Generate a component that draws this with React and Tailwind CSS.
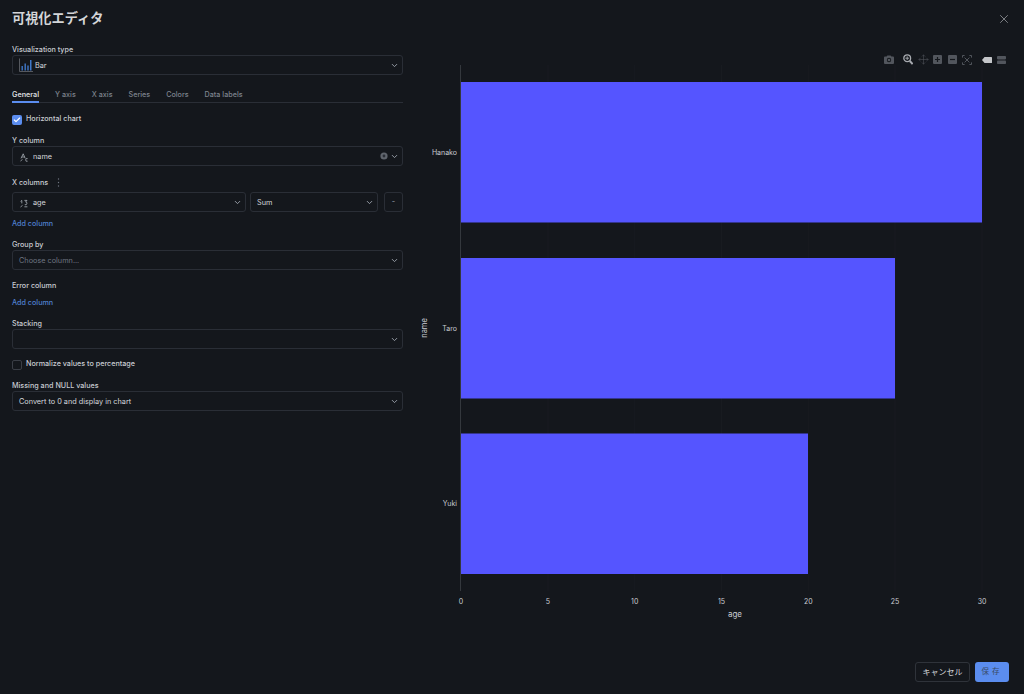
import React from "react";
import { ChevronDown, X, Check, Move } from "lucide-react";

function Chev({ className = "" }) {
  return <ChevronDown size={9} strokeWidth={2.5} className={"text-[#9aa0aa] shrink-0 " + className} />;
}

function Select({ children, className = "", placeholder, clear }) {
  return (
    <div className={"h-[20px] flex items-center rounded-[3px] border border-[#2a2e36] pl-[6px] pr-[3px] text-[7.3px] text-[#d5d8dd] " + className}>
      <div className={"flex-1 flex items-center min-w-0 pt-[2px] " + (placeholder ? "text-[#6f7682]" : "")}>{children}</div>
      {clear && (
        <svg width="8" height="8" viewBox="0 0 8 8" className="mr-[2px]">
          <circle cx="4" cy="4" r="3.6" fill="#5f646c" />
          <circle cx="4" cy="4" r="1.4" fill="#2a2e36" />
        </svg>
      )}
      <Chev />
    </div>
  );
}

function Label({ children, className = "" }) {
  return <div className={"text-[7.2px] pt-[2px] leading-[10px] font-medium text-[#c9ccd2] " + className}>{children}</div>;
}

function TypeIcon({ kind }) {
  return (
    <svg width="8" height="9" viewBox="0 0 8 9" className="ml-[1px] mr-[5px] shrink-0" fill="none" stroke="#aab0b8" strokeWidth="0.8">
      {kind === "text" ? (
        <>
          <path d="M1 5.4 L3.2 0.8 L5.2 5.4" />
          <path d="M1.8 4 H4.6" />
          <path d="M7.6 5.6 A1.4 1.4 0 1 0 7.6 8.2" />
          <path d="M0.5 8 L2.5 6.4" />
        </>
      ) : (
        <>
          <path d="M0.6 2.4 L1.8 1.4 V4.4" />
          <path d="M4.4 1.4 H7 L5.6 3 A1.4 1.4 0 1 1 4.8 5.6" />
          <path d="M0.5 8 L2.5 6.4" />
          <path d="M4.4 7.8 H7.4" />
        </>
      )}
    </svg>
  );
}

function Toolbar() {
  const c = "#52565d";
  return (
    <div className="flex items-center justify-end h-[11px] pr-[18px]">
      <svg width="10" height="9" viewBox="0 0 10 9" className="mr-[9px]">
        <path d="M0 2.6 Q0 1.6 1 1.6 H2.6 L3.4 0.4 H6.6 L7.4 1.6 H9 Q10 1.6 10 2.6 V8 Q10 9 9 9 H1 Q0 9 0 8 Z" fill={c} />
        <circle cx="5" cy="5" r="2.2" fill="#14171c" />
        <circle cx="5" cy="5" r="1.3" fill={c} />
      </svg>
      <svg width="10" height="11" viewBox="0 0 10 11" className="mr-[5px]" fill="none" stroke="#a8abb0" strokeWidth="1.3">
        <circle cx="4.2" cy="4.2" r="3.4" />
        <path d="M6.8 7 L9.6 10" strokeWidth="1.9" />
        <path d="M2.4 4.2 H6 M4.2 2.4 V6" strokeWidth="0.9" />
      </svg>
      <Move size={11} stroke={c} strokeWidth={1.2} className="mr-[4px]" />
      <svg width="9" height="9" viewBox="0 0 9 9" className="mr-[6px]">
        <rect width="9" height="9" rx="1" fill={c} />
        <path d="M2 4.5 H7 M4.5 2 V7" stroke="#14171c" strokeWidth="1.2" />
      </svg>
      <svg width="9" height="9" viewBox="0 0 9 9" className="mr-[5px]">
        <rect width="9" height="9" rx="1" fill={c} />
        <path d="M2 4.5 H7" stroke="#14171c" strokeWidth="1.2" />
      </svg>
      <svg width="10" height="10" viewBox="0 0 10 10" className="mr-[10px]" fill="none" stroke={c} strokeWidth="1">
        <path d="M0.5 2.6 V0.5 H2.6 M7.4 0.5 H9.5 V2.6 M0.5 7.4 V9.5 H2.6 M7.4 9.5 H9.5 V7.4" />
        <path d="M2.6 2.6 L7.4 7.4 M7.4 2.6 L2.6 7.4" />
      </svg>
      <svg width="10" height="6" viewBox="0 0 10 6" className="mr-[5px]">
        <path d="M0 3 L2.5 0 H9.4 Q10 0 10 0.6 V5.4 Q10 6 9.4 6 H2.5 Z" fill="#c4c6c9" />
      </svg>
      <svg width="9" height="8" viewBox="0 0 9 8">
        <rect width="9" height="3.4" rx="0.8" fill={c} />
        <rect y="4.6" width="9" height="3.4" rx="0.8" fill={c} />
      </svg>
    </div>
  );
}

function Chart() {
  const ticks = [[0, 461], [5, 548], [10, 634.7], [15, 721.5], [20, 808.3], [25, 895], [30, 982]];
  const ox = 420, oy = 60;
  const bars = [
    ["Hanako", 82, 140.5, 982],
    ["Taro", 258, 140.5, 895],
    ["Yuki", 433.5, 140.5, 808],
  ];
  const txt = { fontFamily: "Inter, sans-serif", fontSize: 7, fill: "#c9ccd2" };
  return (
    <svg width="604" height="570" viewBox={`${ox} ${oy} 604 570`} className="block">
      {ticks.slice(1).map(([v, x]) => (
        <line key={v} x1={x} x2={x} y1="65" y2="591" stroke="#181b20" strokeWidth="1" />
      ))}
      <line x1="460.5" x2="460.5" y1="65" y2="591" stroke="#34383d" strokeWidth="1" />
      {bars.map(([n, y, h, x2]) => (
        <g key={n}>
          <rect x="461" y={y} width={x2 - 461} height={h} fill="#5555ff" />
          <text x="457" y={y + h / 2 + 2.5} textAnchor="end" style={txt}>{n}</text>
        </g>
      ))}
      {ticks.map(([v, x]) => (
        <text key={v} x={x} y="604" textAnchor="middle" style={txt}>{v}</text>
      ))}
      <text x="735" y="617" textAnchor="middle" style={{ ...txt, fontSize: 8 }}>age</text>
      <text transform="translate(426.5 328) rotate(-90)" textAnchor="middle" style={{ ...txt, fontSize: 7.5 }}>name</text>
    </svg>
  );
}

export default function App() {
  const tabs = ["Y axis", "X axis", "Series", "Colors", "Data labels"];
  return (
    <div className="w-[1024px] h-[694px] bg-[#14171c] flex flex-col overflow-hidden" style={{ fontFamily: "Inter, 'Noto Sans CJK JP', sans-serif" }}>
      <div className="flex items-center justify-between h-[37px] pl-[12px] pr-[13px]">
        <div className="text-[13.2px] font-bold text-[#d3d5d8]">可視化エディタ</div>
        <X size={14} strokeWidth={1.1} className="text-[#b5b8bd]" />
      </div>

      <div className="flex flex-1 min-h-0">
        <div className="w-[391px] ml-[12px] shrink-0 flex flex-col">
          <Label className="mt-[6px]">Visualization type</Label>
          <Select>
            <svg width="14" height="14" viewBox="0 0 14 14" className="mr-[2px] shrink-0 -mt-[2px]">
              <path d="M0.5 0.5 V13.5 H14" stroke="#5d6168" fill="none" strokeWidth="0.9" />
              <rect x="2.5" y="8" width="1.4" height="4.5" fill="#3f78c9" />
              <rect x="5.5" y="5.5" width="1.4" height="7" fill="#3f78c9" />
              <rect x="8.3" y="7.5" width="1.4" height="5" fill="#3f78c9" />
              <rect x="11" y="2" width="1.5" height="10.5" fill="#3f78c9" />
            </svg>
            Bar
          </Select>

          <div className="mt-[12px] flex gap-[16px] border-b border-[#2a2e36] h-[16px] pt-[2px] text-[7.2px] leading-[12px] text-[#7d838d] relative">
            <div className="text-[#d8dadd] font-semibold border-b-[2px] border-[#5b8def] h-[14px]">General</div>
            {tabs.map((t) => (
              <div key={t} className="font-medium">{t}</div>
            ))}
          </div>

          <div className="mt-[11px] flex items-center h-[11px]">
            <div className="w-[10px] h-[10px] rounded-[2px] bg-[#5b8def] flex items-center justify-center">
              <Check size={8} strokeWidth={3.5} className="text-white" />
            </div>
            <span className="ml-[4px] text-[7.2px] font-medium text-[#c9ccd2]">Horizontal chart</span>
          </div>

          <Label className="mt-[9px]">Y column</Label>
          <Select clear>
            <TypeIcon kind="text" />
            name
          </Select>

          <div className="mt-[10px] flex items-center h-[12px]">
            <Label>X columns</Label>
            <svg width="3" height="9" viewBox="0 0 3 9" className="ml-[9px]">
              <circle cx="1.5" cy="1" r="0.7" fill="#6f7682" />
              <circle cx="1.5" cy="4.5" r="0.7" fill="#6f7682" />
              <circle cx="1.5" cy="8" r="0.7" fill="#6f7682" />
            </svg>
          </div>
          <div className="mt-[4px] flex">
            <Select className="w-[234px]">
              <TypeIcon kind="num" />
              age
            </Select>
            <Select className="w-[128px] ml-[4px]">Sum</Select>
            <div className="w-[19px] h-[20px] ml-[6px] rounded-[3px] border border-[#2a2e36] flex items-center justify-center text-[7.4px] text-[#9aa0aa]">-</div>
          </div>
          <div className="mt-[5px] pt-[1px] text-[7.2px] leading-[11px] font-medium text-[#4f80cf]">Add column</div>

          <Label className="mt-[9px]">Group by</Label>
          <Select placeholder>Choose column...</Select>

          <Label className="mt-[9px]">Error column</Label>
          <div className="mt-[5px] pt-[1px] text-[7.2px] leading-[11px] font-medium text-[#4f80cf]">Add column</div>

          <Label className="mt-[9px]">Stacking</Label>
          <Select> </Select>

          <div className="mt-[10px] flex items-center h-[11px]">
            <div className="w-[10px] h-[10px] rounded-[2px] border border-[#3a3e46]" />
            <span className="ml-[4px] text-[7.2px] font-medium text-[#c9ccd2]">Normalize values to percentage</span>
          </div>

          <Label className="mt-[9px]">Missing and NULL values</Label>
          <Select>Convert to 0 and display in chart</Select>
        </div>

        <div className="w-[604px] ml-[17px] flex flex-col">
          <div className="mt-[17px]"><Toolbar /></div>
          <div className="-mt-[5px]"><Chart /></div>
        </div>
      </div>

      <div className="h-[32px] flex justify-end pr-[15px] gap-[5px] shrink-0">
        <div className="w-[55px] h-[20px] rounded-[3px] border border-[#2f333a] flex items-center justify-center text-[8px] text-[#d5d8dd]">キャンセル</div>
        <div className="w-[34px] h-[20px] rounded-[3px] bg-[#5b8def] flex items-center justify-center text-[7.5px] tracking-[3px] text-[#3a4a66]">保存</div>
      </div>
    </div>
  );
}
